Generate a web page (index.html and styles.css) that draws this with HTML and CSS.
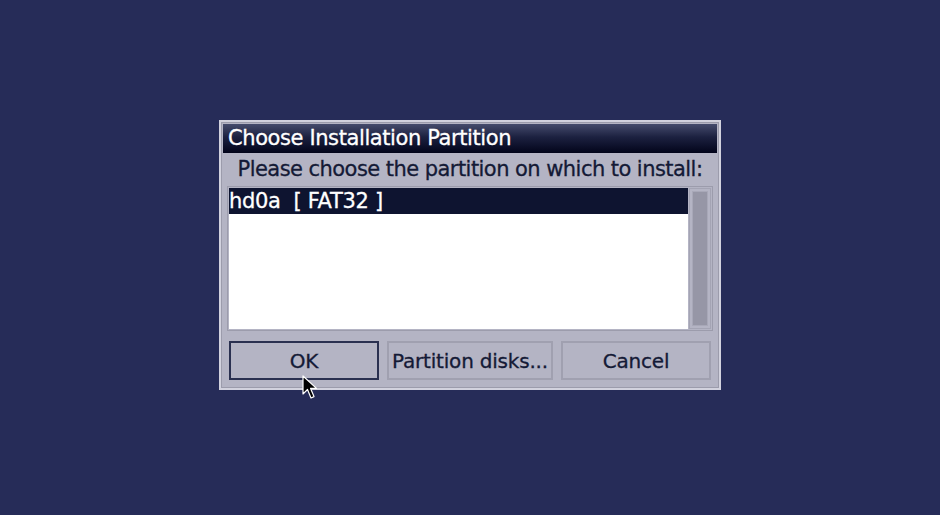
FILE: index.html
```html
<!DOCTYPE html>
<html>
<head>
    <meta charset="UTF-8">
    <title>Choose Installation Partition</title>
    <link rel="stylesheet" href="styles.css">
</head>
<body>
<div id="dialog">
    <div id="title">Choose Installation Partition</div>
    <div id="prompt">Please choose the partition on which to install:</div>
    <div id="list-frame">
        <div id="list">
            <div class="row selected">hd0a&nbsp; [ FAT32 ]</div>
        </div>
        <div id="scrollbar"><div id="track"></div></div>
    </div>
    <div id="buttons">
        <button class="button focused">OK</button>
        <button class="button">Partition disks...</button>
        <button class="button">Cancel</button>
    </div>
    <svg id="cursor" width="16" height="26" viewBox="0 0 16 26">
        <path d="M1 1 L1 19 L5.5 14.5 L9 23 L12 21.6 L8.6 13.4 L14.5 13.4 Z" fill="#000" stroke="#fff" stroke-width="1.2" stroke-linejoin="round"/>
    </svg>
</div>
</body>
</html>
```

FILE: styles.css
```css
body {
    margin: 0px;
    padding: 120px 0px 0px 219px;
    background-color: #262c58;
    font-family: 'DejaVu Sans', Verdana, sans-serif;
    height: 515px;
    box-sizing: border-box;
    overflow: hidden;
}
#dialog {
    position: relative;
    width: 502px;
    height: 270px;
    box-sizing: border-box;
    background-color: #b4b4c4;
    border: 2px solid #d2d2de;
    box-shadow: inset 0 0 0 1px #9c9cac;
    padding: 2px 2px 0px 2px;
}
#title {
    height: 29px;
    line-height: 29px;
    padding-left: 5px;
    font-size: 21px;
    letter-spacing: -0.4px;
    -webkit-text-stroke: 0.3px #ffffff;
    color: #ffffff;
    background: linear-gradient(#454b6c, #1c2140 45%, #02041a);
}
#prompt {
    height: 33px;
    line-height: 32px;
    text-align: center;
    font-size: 21px;
    letter-spacing: -0.55px;
    -webkit-text-stroke: 0.3px #141a36;
    color: #141a36;
    padding-left: 0px;
}
#list-frame {
    display: flex;
    margin: 0px 4px 0px 4px;
    height: 145px;
    box-sizing: border-box;
    border: 1px solid #9c9cac;
    padding: 1px;
}
#list {
    flex: 1;
    background-color: #ffffff;
}
.row {
    height: 26px;
    line-height: 26px;
    padding-left: 0px;
    font-size: 21px;
    letter-spacing: -0.3px;
    -webkit-text-stroke: 0.3px #ffffff;
    color: #141a36;
}
.row.selected {
    background-color: #0e1430;
    color: #ffffff;
}
#scrollbar {
    width: 22px;
    box-sizing: border-box;
    padding: 2px;
    border: 1px solid #a4a4b4;
    margin-left: 1px;
}
#track {
    height: 100%;
    background-color: #9696a6;
    border: 1px solid #a8a8b8;
    box-sizing: border-box;
}
#buttons {
    display: flex;
    gap: 8px;
    margin: 10px 6px 0px 6px;
}
.button {
    height: 39px;
    width: 151px;
    box-sizing: border-box;
    background-color: #b4b4c4;
    border: 2px solid #a0a0b0;
    font-family: 'DejaVu Sans', Verdana, sans-serif;
    font-size: 20px;
    letter-spacing: -0.2px;
    -webkit-text-stroke: 0.3px #141a36;
    color: #141a36;
    padding: 0px;
}
.button:nth-child(2) {
    width: 167px;
}
.button.focused {
    border: 2px solid #2a3050;
}
#cursor {
    position: absolute;
    left: 81px;
    top: 253px;
}
```
